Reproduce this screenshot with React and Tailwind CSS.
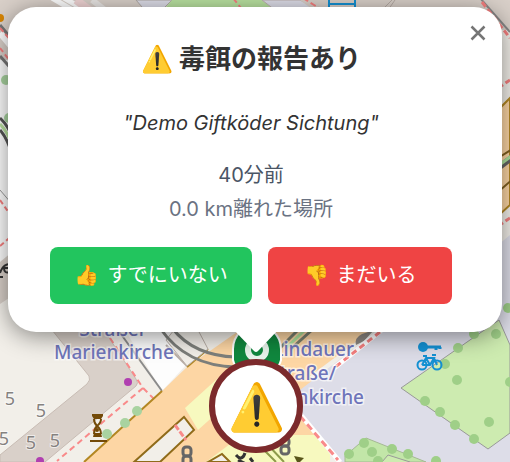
import React from "react";

const houseNumbers = [
  [10, 405],
  [41, 417],
  [4, 445],
  [31, 449],
  [55, 447],
];

const treesOnRoad = [
  [137, 411],
  [125, 423],
  [107, 434],
  [6, 80],
  [9, 118],
];

const treesInPark = [
  [425, 401],
  [440, 412],
  [455, 425],
  [474, 439],
  [489, 422],
  [457, 380],
  [445, 364],
  [458, 348],
  [474, 334],
  [496, 334],
  [510, 382],
  [364, 443],
  [349, 454],
  [372, 452],
  [378, 461],
  [408, 454],
  [436, 461],
  [392, 449],
  [508, 308],
];

function MapLabel({ x, y, anchor = "middle", children }) {
  return (
    <text
      x={x}
      y={y}
      textAnchor={anchor}
      className="fill-[#6f75ba] stroke-white/60 stroke-[3px] font-['Noto_Sans',sans-serif] text-[19px] font-medium [paint-order:stroke]"
    >
      {children}
    </text>
  );
}

function Hourglass({ x, y }) {
  return (
    <g transform={`translate(${x} ${y})`} fill="#734a08">
      <path d="M-5 -14H6V-12L4 -9H-3L-5 -12Z" />
      <path d="M-4 9L-3 5H4L5 9Z" />
      <path d="M-3 -9Q-3 -5 0 -2Q4 1 4 6M4 -9Q4 -5 0 -2Q-3 1 -3 6" fill="none" stroke="#734a08" strokeWidth="2" />
      <circle cy="2" r="2" />
      <rect x="-7" y="12" width="17" height="2" />
    </g>
  );
}

function BikeRental() {
  return (
    <g fill="none" stroke="#1490d2" strokeWidth="2">
      <circle cx="423" cy="347" r="5" fill="#1490d2" stroke="none" />
      <path d="M426 347H441M436 347V350M440 347V349" strokeWidth="3" />
      <circle cx="422" cy="365" r="4.500" />
      <circle cx="437" cy="365" r="4.500" />
      <path d="M422 365L426 358H434L430 365H422M434 358L437 365M426 358L430 365M423 356H427M432 355H436" />
    </g>
  );
}

function MapBackdrop() {
  return (
    <svg
      aria-hidden="true"
      viewBox="0 0 510 462"
      preserveAspectRatio="xMidYMid slice"
      className="absolute inset-0 h-full w-full"
    >
      <rect width="510" height="462" fill="#f2efe9" />

      <path d="M0 0H170L100 60H0Z" fill="#d9d0c9" />
      <path d="M52 -2L76 12M64 -2L88 12" stroke="#fff" strokeWidth="5" />
      <path d="M76 0L92 12" stroke="#f0d4d4" strokeWidth="8" />
      <path d="M92 0L110 14" stroke="#e9e6e4" strokeWidth="6" />
      <path d="M136 0H172L158 14H148Z" fill="#dddde8" stroke="#b0a8a4" />
      <path d="M172 0H262L280 14H160Z" fill="#b9e2a0" />
      <path d="M262 0H300L328 14H280Z" fill="#dddde8" stroke="#bdb2ad" />
      <path d="M300 0H510V30H340Z" fill="#d9d0c9" />
      <path d="M392 0L380 12M395 0L388 10" stroke="#b5aaa4" />
      <path d="M233 -2L241 8M303 -2L322 10" stroke="#f57f7f" strokeWidth="2" strokeDasharray="6 3" />
      <path d="M329 -2V10M355 -2V10M329 4H355" fill="none" stroke="#1490d2" strokeWidth="2" />

      <path d="M0 60H12V280H0Z" fill="#fdfdfd" />
      <circle cx="0" cy="18" r="4" fill="#d78505" />
      <path d="M0 25L14 42M0 56L14 72" stroke="#777" strokeWidth="3" />
      <path d="M0 33L14 50" stroke="#fff" strokeWidth="6" />
      <path d="M0 28L14 44M0 48L14 66M0 200L14 220M0 246L14 234" stroke="#f57f7f" strokeWidth="2" strokeDasharray="5 3" />
      <path d="M0 118Q9 126 14 142M0 130Q7 138 12 154" fill="none" stroke="#555" strokeWidth="3" />
      <path d="M0 124Q8 132 13 148" fill="none" stroke="#b9e2a0" strokeWidth="3" />
      <path d="M0 190L12 204" stroke="#999" />
      <path d="M0 262L12 252V296L0 304Z" fill="#d9d0c9" />
      <path d="M0 273Q3 264 10 264M10 268H4Q4 274 10 272M0 277H3" fill="none" stroke="#333" strokeWidth="2" />

      <path d="M488 0H510V28L500 24Z" fill="#d9d0c9" />
      <path d="M480 -2L510 32" stroke="#888" strokeWidth="2" />
      <path d="M482 2L510 38M498 88L510 80M498 226L510 218" stroke="#f57f7f" strokeWidth="3" strokeDasharray="6 3" />
      <path d="M498 110L510 98V205L498 216Z" fill="#fdd6a4" stroke="#b38722" strokeWidth="2" />
      <path d="M498 158L514 148M498 192L514 178" stroke="#806020" strokeWidth="2" />
      <path d="M498 168L514 156" stroke="#666" strokeWidth="6" />
      <path d="M498 166L514 154" stroke="#aee29c" strokeWidth="3" />

      <path d="M52 330L89 376Q91 380 87 384L0 455V462H45L136 386Q139 383 136 379L104 330Z" fill="#d9d0c9" stroke="#c8bcb4" />
      <path d="M125 330H200V350L162 391Z" fill="#fdfdfd" />
      <path d="M118 330L162 391" stroke="#8b8b8b" strokeWidth="2" />
      <path d="M110 338L143 388L154 399M143 388L57 461" fill="none" stroke="#f98a8a" strokeWidth="2" strokeDasharray="6 4" />

      <path d="M240 330H300L330 462H84L162 391L187 367Z" fill="#fdd6a4" />
      <path d="M162 391L84 462M187 367L208 349" stroke="#b38722" strokeWidth="2" />
      <path d="M166 345L187 366" stroke="#b8aea6" strokeWidth="2" />
      <path d="M208 349L187 366L166 340L174 330H198Z" fill="#f2efe9" stroke="#b8aea6" />
      <path d="M218 378L185 408L198 430L226 405Z" fill="#f7f9bf" />
      <path d="M134 462L184 417L194 430L160 462Z" fill="#f2efe9" stroke="#8f6b1a" strokeWidth="2" />
      <path d="M175 425L186 440" stroke="#f98a8a" strokeWidth="3" strokeDasharray="6 2" />
      <path d="M206 462L242 435H330V462Z" fill="#f7f9bf" />
      <path d="M208 462L222 454L230 462Z" fill="#f2efe9" stroke="#8f6b1a" strokeWidth="2" />
      <path d="M262 448L276 462M268 445L284 462" stroke="#8d9a4a" strokeWidth="2" />
      <path d="M294 456L304 458L298 464Z" fill="#59551a" />

      <path d="M378 330L300 390V415L342 462H510V235L498 245Z" fill="#dddde8" />
      <path d="M276 330H372L298 385Z" fill="#fdd6a4" />
      <path d="M298 330L280 348M312 330L292 348" stroke="#7b8070" strokeWidth="3" />
      <path d="M305 330L286 348" stroke="#aee29c" strokeWidth="3" />
      <path d="M356 345Q354 338 362 334L374 330L364 341Z" fill="#8c8781" />
      <path d="M384 328L334 368" stroke="#fff" strokeWidth="5" />
      <path d="M380 332L334 368" stroke="#f57f7f" strokeWidth="3" strokeDasharray="6 4" />
      <path d="M300 414L340 462" stroke="#fff" strokeWidth="5" />
      <path d="M300 416L338 460" stroke="#f98a8a" strokeWidth="3" strokeDasharray="7 4" />

      <path d="M160 328Q186 366 236 367M172 328Q194 356 236 357" fill="none" stroke="#7d7f7b" strokeWidth="3" />

      <path d="M401 388L480 333L499 320L510 345V433L488 449Z" fill="#cdebb0" stroke="#999" />
      <path d="M345 456L366 438L426 462H345Z" fill="#c2e6a8" stroke="#a5b894" />
      <path d="M382 462L388 455L410 462" fill="#cdebb0" stroke="#999" />
      {treesInPark.map(([cx, cy]) => (
        <circle key={`${cx}-${cy}`} cx={cx} cy={cy} r="5" fill="#9fcf88" />
      ))}
      {treesOnRoad.map(([cx, cy]) => (
        <circle key={`${cx}-${cy}`} cx={cx} cy={cy} r="5" fill="#a9d3a0" />
      ))}

      <circle cx="128" cy="382" r="4" fill="#b03fb0" />
      <circle cx="40" cy="461" r="4" fill="#b03fb0" />
      <Hourglass x={97} y={428} />
      <BikeRental />

      <g fill="none" stroke="#666" strokeWidth="3">
        <rect x="183" y="447" width="8" height="9" rx="3" />
        <rect x="183" y="456" width="8" height="9" rx="3" />
        <rect x="281" y="438" width="8" height="8" rx="3" />
        <rect x="281" y="446" width="8" height="8" rx="3" />
        <path d="M236 455Q242 462 245 453M238 460L246 464M250 458L253 462" stroke="#333" />
      </g>

      {houseNumbers.map(([x, y]) => (
        <text
          key={`${x}-${y}`}
          x={x}
          y={y}
          textAnchor="middle"
          className="fill-[#85827f] stroke-white/60 stroke-2 font-['Noto_Sans',sans-serif] text-[18px] [paint-order:stroke]"
        >
          5
        </text>
      ))}

      <MapLabel x={113} y={336}>Straßer</MapLabel>
      <MapLabel x={114} y={359}>Marienkirche</MapLabel>
      <MapLabel x={354} y={356} anchor="end">Lindauer</MapLabel>
      <MapLabel x={336} y={380} anchor="end">Straße/</MapLabel>
      <MapLabel x={364} y={404} anchor="end">Marienkirche</MapLabel>
    </svg>
  );
}

function LocationPin() {
  return (
    <svg aria-hidden="true" viewBox="0 0 52 60" className="h-[60px] w-[52px]">
      <path d="M2 25A24 24 0 0 1 50 25V36C48 46 36 52 26 58C16 52 4 46 2 36Z" fill="#10883e" stroke="#fff" strokeWidth="2" />
      <circle cx="26" cy="26" r="9" fill="none" stroke="#e9f5ec" strokeWidth="6" />
    </svg>
  );
}

export default function App() {
  return (
    <div className="relative min-h-screen overflow-hidden font-[Inter,'Noto_Sans_CJK_JP',sans-serif]">
      <MapBackdrop />

      <main className="relative px-2 pt-[7px]">
        <div className="relative">
          <div className="absolute top-full left-1/2 -mt-2 ml-[2px] -translate-x-1/2">
            <LocationPin />
          </div>

          <section
            aria-labelledby="report-title"
            className="relative rounded-[28px] bg-white pt-8 pr-[50px] pb-7 pl-[42px] text-center shadow-[0_4px_24px_rgba(0,0,0,0.45)]"
          >
            <button
              type="button"
              aria-label="閉じる"
              className="absolute top-[14px] right-[12px] flex h-6 w-6 items-center justify-center text-[#757575]"
            >
              <svg viewBox="0 0 16 16" className="h-4 w-4" fill="none" stroke="currentColor" strokeWidth="2.500">
                <path d="M1.500 1.500L14.500 14.500M14.500 1.500L1.500 14.500" />
              </svg>
            </button>

            <h1 id="report-title" className="text-[26px] leading-10 font-bold text-[#333]">
              ⚠️ 毒餌の報告あり
            </h1>
            <p className="mt-7 text-xl leading-8 text-[#333] italic">"Demo Giftköder Sichtung"</p>
            <p className="mt-5 text-xl leading-8 text-gray-600">40分前</p>
            <p className="mt-[2px] text-xl leading-8 text-gray-500">0.0 km離れた場所</p>

            <div className="mt-[22px] flex gap-4 text-xl text-white">
              <button
                type="button"
                className="flex h-[57px] flex-[11_1_0%] items-center justify-center gap-2 rounded-lg bg-[#22c55e] pb-[2px] whitespace-nowrap"
              >
                <span>👍</span>
                <span>すでにいない</span>
              </button>
              <button
                type="button"
                className="flex h-[57px] flex-[10_1_0%] items-center justify-center gap-2 rounded-lg bg-[#ef4444] pb-[2px] whitespace-nowrap"
              >
                <span>👎</span>
                <span>まだいる</span>
              </button>
            </div>
          </section>

          <svg
            aria-hidden="true"
            viewBox="0 0 48 24"
            className="absolute top-full left-1/2 -mt-[3px] ml-[1px] h-6 w-12 -translate-x-1/2"
          >
            <path d="M1 0H47L26 22Q24 24 22 22Z" fill="#fff" />
          </svg>

          <div className="absolute top-full left-1/2 mt-[27px] ml-[1px] flex h-[94px] w-[94px] -translate-x-1/2 items-center justify-center rounded-full border-6 border-[#7c2a2c] bg-white">
            <span className="text-[46px] leading-none">⚠️</span>
          </div>
        </div>
      </main>
    </div>
  );
}
